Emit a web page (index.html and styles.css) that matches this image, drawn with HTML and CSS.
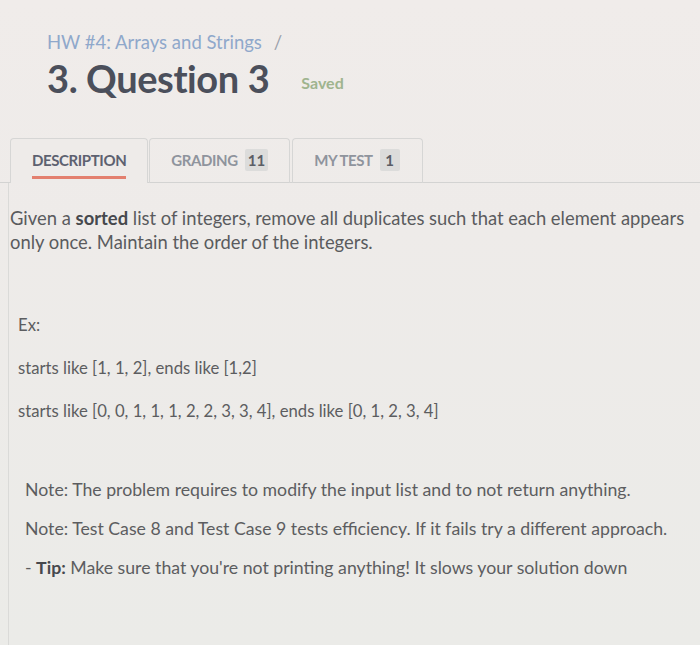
FILE: index.html
```html
<!DOCTYPE html>
<html lang="en">
<head>
<meta charset="utf-8">
<title>3. Question 3</title>
<link rel="stylesheet" href="styles.css">
</head>
<body>
<div class="page">
  <header class="head">
    <div class="crumb"><span class="crumb-link">HW #4: Arrays and Strings</span><span class="sep">/</span></div>
    <div class="title-row">
      <h1 class="title">3. Question 3</h1>
      <span class="saved">Saved</span>
    </div>
  </header>

  <nav class="tabs">
    <div class="tab tab-active"><span class="tab-label">DESCRIPTION</span></div>
    <div class="tab"><span class="tab-label">GRADING</span><span class="badge">11</span></div>
    <div class="tab tab-last"><span class="tab-label">MY TEST</span><span class="badge">1</span></div>
  </nav>

  <main class="content">
    <p class="intro">Given a <strong>sorted</strong> list of integers, remove all duplicates such that each element appears only once. Maintain the order of the integers.</p>

    <div class="examples">
      <p class="ex-head">Ex:</p>
      <p class="ex">starts like [1, 1, 2], ends like [1,2]</p>
      <p class="ex">starts like [0, 0, 1, 1, 1, 2, 2, 3, 3, 4], ends like [0, 1, 2, 3, 4]</p>
    </div>

    <div class="notes">
      <p class="note">Note: The problem requires to modify the input list and to not return anything.</p>
      <p class="note">Note: Test Case 8 and Test Case 9 tests efficiency. If it fails try a different approach.</p>
      <p class="note">- <strong>Tip:</strong> Make sure that you're not printing anything! It slows your solution down</p>
    </div>
  </main>
</div>
</body>
</html>
```

FILE: styles.css
```css
html, body {
  margin: 0;
  padding: 0;
}

body {
  background: linear-gradient(180deg, #f0ecea 0%, #eeebe9 35%, #ebebe8 100%);
  font-family: Lato, "Open Sans", "Liberation Sans", sans-serif;
  color: #5c5d60;
  width: 700px;
  height: 645px;
  overflow: hidden;
}

.page {
  display: flex;
  flex-direction: column;
  height: 645px;
}

.head {
  padding: 30px 0 0 47px;
}

.crumb {
  font-size: 18.5px;
  line-height: 24px;
  color: #8fa8cb;
  display: flex;
  gap: 12px;
}

.sep {
  color: #9aa0aa;
}

.title-row {
  display: flex;
  align-items: baseline;
  gap: 32px;
  margin-top: 2px;
}

.title {
  margin: 0;
  font-size: 38px;
  line-height: 44px;
  font-weight: 700;
  color: #4b4f5b;
  letter-spacing: -0.4px;
}

.saved {
  font-size: 16px;
  font-weight: 700;
  color: #9fb48f;
  position: relative;
  top: -4px;
}

.tabs {
  display: flex;
  margin-top: 38px;
  padding-left: 10px;
  border-bottom: 1px solid #d3d3d2;
  height: 44px;
}

.tab {
  box-sizing: border-box;
  height: 45px;
  display: flex;
  align-items: flex-start;
  padding: 10px 21px 0 21px;
  border: 1px solid #d6d6d5;
  border-bottom: none;
  border-radius: 4px 4px 0 0;
  margin-right: 1px;
  font-size: 15px;
  font-weight: 700;
  color: #8f949d;
  letter-spacing: -0.4px;
}

.tab-active {
  color: #5d6170;
  background: #eeebe9;
}

.tab-last {
  margin-left: 1px;
  padding-right: 22px;
}

.tab-label {
  line-height: 22px;
}

.tab-active .tab-label {
  padding-bottom: 5px;
  border-bottom: 3px solid #e3806f;
}

.badge {
  box-sizing: border-box;
  margin-left: 7px;
  min-width: 20px;
  padding: 0 3px;
  height: 22px;
  line-height: 22px;
  text-align: center;
  background: #dcdcdb;
  color: #5b5e66;
  border-radius: 2px;
  letter-spacing: 0;
}

.content {
  flex: 1;
  margin-left: 8px;
  border-left: 1px solid #dadad8;
  padding-left: 1px;
  padding-top: 23px;
}

.content p {
  margin: 0;
  font-size: 17.6px;
  line-height: 24px;
}

.content .intro {
  font-size: 18.4px;
  color: #5a5b5e;
}

.intro strong {
  color: #46484d;
  font-weight: 700;
}

.examples {
  margin-top: 59px;
  padding-left: 8px;
  display: flex;
  flex-direction: column;
  gap: 19px;
}

.content .examples p {
  font-size: 16.7px;
}

.notes {
  margin-top: 55px;
  padding-left: 15px;
  display: flex;
  flex-direction: column;
  gap: 15px;
}

.content .notes p {
  font-size: 17.7px;
}

.note strong {
  color: #46484d;
}
```
